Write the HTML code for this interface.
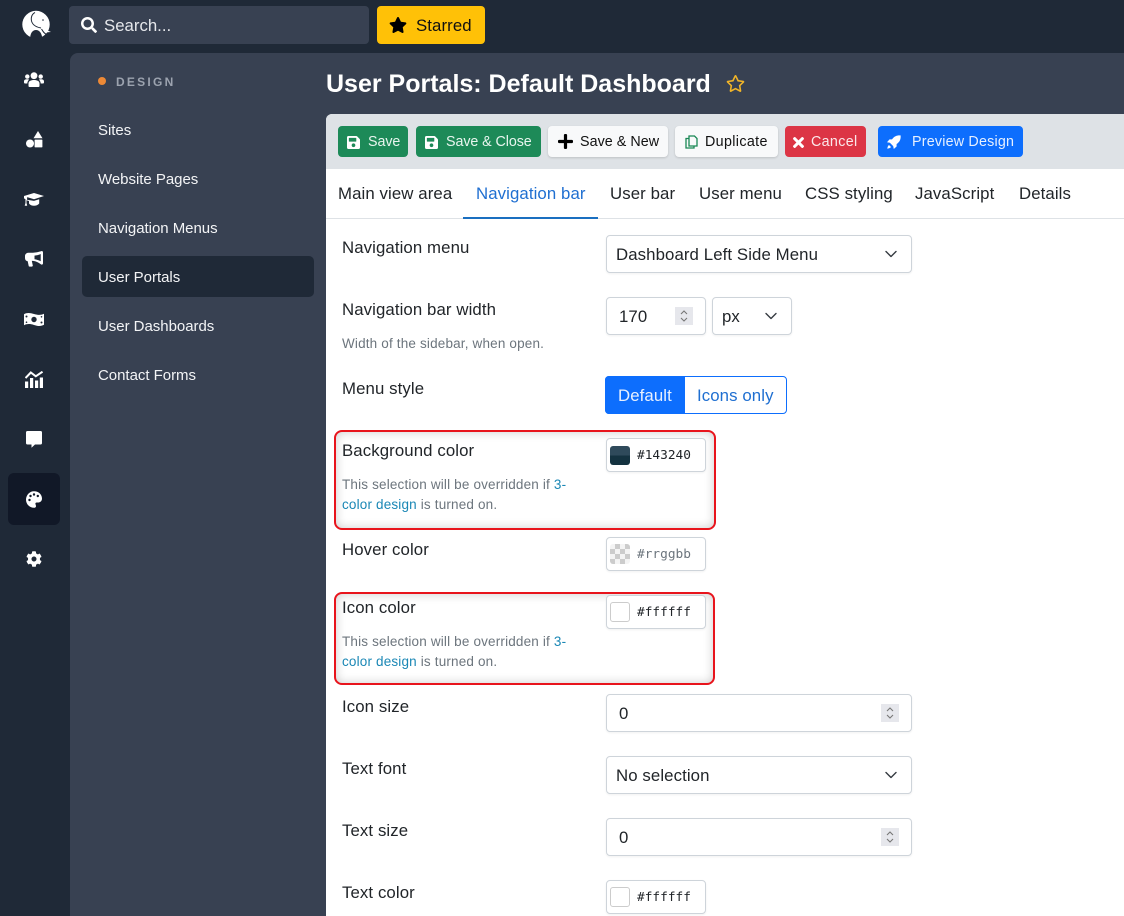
<!DOCTYPE html>
<html><head><meta charset="utf-8"><style>
html,body{margin:0;padding:0;width:1124px;height:916px;overflow:hidden;background:#1f2937;font-family:"Liberation Sans",sans-serif;color:#212529}
.a{position:absolute}
.t{position:absolute;white-space:nowrap;font-size:16.8px;line-height:20px;letter-spacing:.1px;margin-top:1px}
.n{color:#f3f4f6;font-size:15px;letter-spacing:-.03px;left:98px}
.h{font-size:13.5px;line-height:20px;color:#6c757d;letter-spacing:.17px;left:342px}
.h a{color:#1a87b5}
.b{position:absolute;top:126px;height:31px;border-radius:4px;font-size:14.3px;line-height:33px;white-space:nowrap;box-sizing:border-box}
.f{position:absolute;box-sizing:border-box;border:1px solid #ced4da;border-radius:4px;background:#fff;box-shadow:0 1px 2px rgba(0,0,0,.06)}
.sw{position:absolute;left:610px;width:20px;height:20px;box-sizing:border-box;border-radius:3px;border:1px solid #ccc;background:#fff}
.m{position:absolute;left:637px;font-family:"DejaVu Sans Mono",monospace;font-size:12.8px;line-height:18px;white-space:nowrap;color:#212529;margin-top:1px}
.r{position:absolute;box-sizing:border-box;border:2px solid #e8141c;border-radius:8px;box-shadow:inset 0 0 10px rgba(0,0,0,.2)}
svg{position:absolute;display:block}
</style></head><body>
<div class="a" style="left:70px;top:53px;width:1054px;height:863px;background:#384152;border-radius:8px 0 0 0"></div>
<div class="a" style="left:69px;top:6px;width:300px;height:38px;background:#384152;border-radius:4px"></div>
<svg style="left:81px;top:17px" width="16" height="16" viewBox="0 0 512 512" fill="#fff"><path d="M505 442.7L405.3 343c-4.5-4.5-10.6-7-17-7H372c27.6-35.3 44-79.7 44-128C416 93.1 322.9 0 208 0S0 93.1 0 208s93.1 208 208 208c48.3 0 92.7-16.4 128-44v16.3c0 6.4 2.5 12.5 7 17l99.7 99.7c9.4 9.4 24.6 9.4 33.9 0l28.3-28.3c9.4-9.4 9.4-24.6.1-34zM208 336c-70.7 0-128-57.2-128-128 0-70.7 57.2-128 128-128 70.7 0 128 57.2 128 128 0 70.7-57.2 128-128 128z"/></svg>
<div class="t" style="left:104px;top:15px;color:#e5e7eb;letter-spacing:0">Search...</div>
<div class="a" style="left:377px;top:6px;width:108px;height:38px;background:#ffc107;border-radius:4px"></div>
<svg style="left:389px;top:17px" width="18" height="16" viewBox="0 0 576 512" fill="#000"><path d="M259.3 17.8L194 150.2 47.9 171.5c-26.2 3.8-36.7 36.1-17.7 54.6l105.7 103-25 145.5c-4.5 26.3 23.2 46 46.4 33.7L288 439.6l130.7 68.7c23.2 12.2 50.9-7.4 46.4-33.7l-25-145.5 105.7-103c19-18.5 8.5-50.8-17.7-54.6L382 150.2 316.7 17.8c-11.7-23.6-45.6-23.9-57.4 0z"/></svg>
<div class="t" style="left:416px;top:15px;color:#111">Starred</div>

<!-- logo -->
<svg style="left:20px;top:9px" width="34" height="32" viewBox="0 0 34 32"><circle cx="16" cy="15.500" r="13.700" fill="#fff"/><path d="M10 31c0-7 2.500-10 6-10s6 3 6.500 10z" fill="#1f2937"/><path d="M15 3.500C11 5.500 10 11 13 15c2 2.500 5 3.500 8 4" fill="none" stroke="#1f2937" stroke-width="1"/><path d="M21.500 20c1.500 2.500 3 5 5.500 5.500" fill="none" stroke="#1f2937" stroke-width="1"/><path d="M22 19l9 4-6 .5z" fill="#fff"/><circle cx="23" cy="11" r=".8" fill="#1f2937"/></svg>

<!-- rail -->
<div class="a" style="left:8px;top:473px;width:52px;height:52px;background:#111827;border-radius:6px"></div>
<svg style="left:24px;top:72px" width="20" height="15" viewBox="0 0 20 15" fill="#fff"><circle cx="10" cy="3.700" r="3.400"/><circle cx="3.300" cy="4.600" r="2.200"/><circle cx="16.700" cy="4.600" r="2.200"/><path d="M4.500 14v-2.500C4.500 9 7 8 10 8s5.500 1 5.500 3.500V14q0 1-1 1h-9q-1 0-1-1zM0 9.500C0 8 1 7.300 3.300 7.300c.8 0 1.400.2 1.800.5-1 .8-1.700 2-1.800 3.700H1q-1 0-1-1zM20 9.500C20 8 19 7.300 16.700 7.300c-.8 0-1.400.2-1.800.5 1 .8 1.700 2 1.800 3.700H19q1 0 1-1z"/></svg>
<svg style="left:26px;top:131px" width="17" height="17" viewBox="0 0 17 17" fill="#fff"><path d="M12 0l4.500 7.300h-9z"/><circle cx="4" cy="12.500" r="4"/><rect x="8.600" y="8.600" width="7.800" height="7.800" rx=".6"/></svg>
<svg style="left:24px;top:193px" width="20" height="13" viewBox="0 0 20 13" fill="#fff"><path d="M10 0l10 3-10 3.200L3.200 4.100 3 6.700 10 7.900l5.200-1.600V10.500C14 12 12 12.800 10 12.800S6 12 5 10.500V8L2.500 7.300V10l.7 2.800H.7L1.500 10V6.300C.7 6 0 5.400 0 5V3z"/></svg>
<svg style="left:25px;top:251px" width="18" height="16" viewBox="0 0 18 16" fill="#fff"><path d="M16 .3c.9-.6 2-.2 2 1.200v10.800c0 1.200-1 1.700-2 1.100-2.800-2-5-3.300-8-3.500H6.800l1 4.600c.1.600-.4 1.100-1 1.100H4.500c-.4 0-.7-.3-.8-.6L2.700 10.300C1 10 0 8.800 0 7V5c0-2 1.600-3.300 3.500-3.300H8c3 0 5.300-.7 8-1.400zM15.700 3C13.800 4 11.500 4.400 9.500 4.600v3.600c2 .3 4.300 1 6.200 2z" fill-rule="evenodd"/></svg>
<svg style="left:24px;top:312px" width="20" height="15" viewBox="0 0 20 15"><path d="M0 2.200C3 .5 6 .8 10 2s7 1.300 10-.2v11c-3 1.700-6 1.500-10 .2s-7-1.300-10 .2z" fill="#fff"/><circle cx="10" cy="7.500" r="2.700" fill="#1f2937"/><circle cx="2.500" cy="4.500" r="1" fill="#1f2937"/><circle cx="17.500" cy="10.500" r="1" fill="#1f2937"/><circle cx="2.500" cy="10.200" r=".8" fill="#1f2937"/><circle cx="17.500" cy="4.800" r=".8" fill="#1f2937"/></svg>
<svg style="left:25px;top:371px" width="18" height="17" viewBox="0 0 18 17" fill="#fff"><rect x="0" y="10.500" width="3.200" height="6.500"/><rect x="5" y="7" width="3.200" height="10"/><rect x="10" y="9.500" width="3.200" height="7.500"/><rect x="14.800" y="6.500" width="3.200" height="10.500"/><path d="M.5 7L5.800 1.500l5 3.800L17.500.7" fill="none" stroke="#fff" stroke-width="2"/></svg>
<svg style="left:26px;top:431px" width="16" height="17" viewBox="0 0 16 17" fill="#fff"><path d="M1.500 0h13A1.500 1.500 0 0 1 16 1.500v10.500a1.500 1.500 0 0 1-1.500 1.500H9L5.500 16.800V13.500h-4A1.500 1.500 0 0 1 0 12V1.500A1.500 1.500 0 0 1 1.500 0z"/></svg>
<svg style="left:26px;top:491px" width="16" height="17" viewBox="0 0 16 17"><path d="M8 .2c4.400 0 8 3 8 7.300 0 2.700-2 4-4 4h-1.300c-1 0-1.600.9-1.200 1.800.3.700.5 1.300.5 1.900 0 1-.8 1.600-2 1.600-4.400 0-8-3.700-8-8.200S3.600.2 8 .2z" fill="#fff"/><g fill="#111827"><circle cx="3.500" cy="9" r="1.200"/><circle cx="4.500" cy="5" r="1.200"/><circle cx="8" cy="3.500" r="1.200"/><circle cx="11.800" cy="5" r="1.200"/></g></svg>
<svg style="left:26px;top:551px" width="16" height="16" viewBox="0 0 512 512" fill="#fff"><path d="M487.400 315.700l-42.600-24.600c4.300-23.200 4.300-47 0-70.200l42.600-24.600c4.900-2.800 7.100-8.600 5.500-14-11.100-35.600-30-67.800-54.700-94.600-3.800-4.100-10-5.100-14.800-2.300L380.800 110c-17.900-15.400-38.500-27.300-60.800-35.100V25.800c0-5.600-3.900-10.500-9.400-11.700-36.700-8.200-74.300-7.800-109.200 0-5.500 1.200-9.400 6.100-9.400 11.700V75c-22.200 7.900-42.800 19.800-60.800 35.100L88.700 85.500c-4.900-2.800-11-1.900-14.800 2.300-24.700 26.700-43.600 58.900-54.700 94.600-1.700 5.400.6 11.200 5.500 14L67.300 221c-4.300 23.200-4.300 47 0 70.200l-42.600 24.600c-4.900 2.800-7.100 8.600-5.500 14 11.100 35.600 30 67.800 54.700 94.600 3.800 4.100 10 5.100 14.800 2.300l42.600-24.600c17.900 15.400 38.500 27.300 60.800 35.100v49.200c0 5.600 3.900 10.500 9.400 11.700 36.700 8.200 74.300 7.800 109.200 0 5.500-1.200 9.400-6.100 9.400-11.700v-49.200c22.200-7.900 42.800-19.800 60.800-35.100l42.600 24.600c4.900 2.800 11 1.900 14.800-2.300 24.700-26.700 43.600-58.900 54.700-94.600 1.500-5.500-.7-11.300-5.600-14.100zM256 336c-44.100 0-80-35.900-80-80s35.900-80 80-80 80 35.900 80 80-35.900 80-80 80z"/></svg>

<!-- sidebar nav -->
<div class="a" style="left:98px;top:77px;width:8px;height:8px;border-radius:50%;background:#ed8936"></div>
<div class="t" style="left:116px;top:71px;font-size:12px;font-weight:bold;letter-spacing:2.250px;color:#9ca3af">DESIGN</div>
<div class="a" style="left:82px;top:256px;width:232px;height:41px;background:#1f2937;border-radius:5px"></div>
<div class="t n" style="top:120px">Sites</div>
<div class="t n" style="top:169px">Website Pages</div>
<div class="t n" style="top:218px">Navigation Menus</div>
<div class="t n" style="top:267px">User Portals</div>
<div class="t n" style="top:316px">User Dashboards</div>
<div class="t n" style="top:365px">Contact Forms</div>

<!-- heading -->
<div class="t" style="left:326px;top:68px;font-size:25px;line-height:30px;font-weight:bold;color:#fff;letter-spacing:0">User Portals: Default Dashboard</div>
<svg style="left:726px;top:75px" width="19" height="17" viewBox="0 0 576 512" fill="#f0b429"><path d="M528.100 171.500L382 150.200 316.700 17.800c-11.700-23.600-45.600-23.900-57.400 0L194 150.200 47.900 171.500c-26.200 3.800-36.700 36.100-17.700 54.600l105.700 103-25 145.500c-4.500 26.300 23.200 46 46.400 33.700L288 439.600l130.700 68.700c23.200 12.200 50.900-7.400 46.400-33.700l-25-145.500 105.700-103c19-18.500 8.500-50.800-17.700-54.600zM388.600 312.300l23.700 138.400L288 385.400l-124.300 65.300 23.700-138.400-100.600-98 139-20.200 62.200-126 62.200 126 139 20.200-100.600 98z"/></svg>

<!-- card -->
<div class="a" style="left:326px;top:114px;width:798px;height:802px;background:#fff;border-radius:6px 0 0 0;overflow:hidden"><div style="height:55px;background:#dee2e6"></div></div>

<!-- buttons -->
<div class="b" style="left:338px;width:70px;background:#1d8a58;color:#e8f5ee;padding-left:30px;letter-spacing:-.08px">Save</div>
<svg style="left:347px;top:136px" width="13" height="13" viewBox="0 32 448 448" fill="#fff"><path d="M433.941 129.941l-83.882-83.882A48 48 0 0 0 316.118 32H48C21.490 32 0 53.490 0 80v352c0 26.510 21.490 48 48 48h352c26.510 0 48-21.490 48-48V163.882a48 48 0 0 0-14.059-33.941zM224 416c-35.346 0-64-28.654-64-64 0-35.346 28.654-64 64-64s64 28.654 64 64c0 35.346-28.654 64-64 64zm96-304.520V212c0 6.627-5.373 12-12 12H76c-6.627 0-12-5.373-12-12V108c0-6.627 5.373-12 12-12h228.520c3.183 0 6.235 1.264 8.485 3.515l3.480 3.480A11.996 11.996 0 0 1 320 111.480z"/></svg>
<div class="b" style="left:416px;width:125px;background:#1d8a58;color:#e8f5ee;padding-left:30px;letter-spacing:-.08px">Save &amp; Close</div>
<svg style="left:425px;top:136px" width="13" height="13" viewBox="0 32 448 448" fill="#fff"><path d="M433.941 129.941l-83.882-83.882A48 48 0 0 0 316.118 32H48C21.490 32 0 53.490 0 80v352c0 26.510 21.490 48 48 48h352c26.510 0 48-21.490 48-48V163.882a48 48 0 0 0-14.059-33.941zM224 416c-35.346 0-64-28.654-64-64 0-35.346 28.654-64 64-64s64 28.654 64 64c0 35.346-28.654 64-64 64zm96-304.520V212c0 6.627-5.373 12-12 12H76c-6.627 0-12-5.373-12-12V108c0-6.627 5.373-12 12-12h228.520c3.183 0 6.235 1.264 8.485 3.515l3.480 3.480A11.996 11.996 0 0 1 320 111.480z"/></svg>
<div class="b" style="left:548px;width:120px;background:#f8f9fa;color:#111;padding-left:32px;letter-spacing:.05px;box-shadow:0 1px 2px rgba(0,0,0,.15)">Save &amp; New</div>
<svg style="left:558px;top:134px" width="15" height="15" viewBox="0 32 448 448" fill="#000"><path d="M416 208H272V64c0-17.670-14.330-32-32-32h-32c-17.670 0-32 14.330-32 32v144H32c-17.670 0-32 14.330-32 32v32c0 17.670 14.330 32 32 32h144v144c0 17.670 14.330 32 32 32h32c17.670 0 32-14.330 32-32V304h144c17.670 0 32-14.330 32-32v-32c0-17.670-14.330-32-32-32z"/></svg>
<div class="b" style="left:675px;width:103px;background:#f8f9fa;color:#111;padding-left:30px;letter-spacing:.35px;box-shadow:0 1px 2px rgba(0,0,0,.15)">Duplicate</div>
<svg style="left:685px;top:135px" width="13" height="14" viewBox="0 0 13 14" fill="none" stroke="#198754" stroke-width="1.300"><path d="M4 1h5.500L12 3.500V11H4zM4 3.500H1V13h8v-2"/></svg>
<div class="b" style="left:785px;width:81px;background:#dc3545;color:#fbe9eb;padding-left:26px;letter-spacing:.33px">Cancel</div>
<svg style="left:793px;top:137px" width="11" height="11" viewBox="0 80 352 352" fill="#fff"><path d="M242.720 256l100.070-100.070c12.280-12.280 12.280-32.190 0-44.480l-22.240-22.240c-12.280-12.280-32.190-12.280-44.480 0L176 189.280 75.930 89.210c-12.280-12.280-32.190-12.280-44.480 0L9.210 111.450c-12.280 12.280-12.280 32.190 0 44.480L109.280 256 9.210 356.070c-12.280 12.280-12.280 32.190 0 44.480l22.240 22.240c12.280 12.280 32.200 12.280 44.480 0L176 322.720l100.070 100.070c12.280 12.280 32.200 12.280 44.480 0l22.240-22.240c12.280-12.280 12.280-32.190 0-44.480L242.720 256z"/></svg>
<div class="b" style="left:878px;width:145px;background:#0d6efd;color:#e7f0ff;padding-left:34px;letter-spacing:.2px">Preview Design</div>
<svg style="left:887px;top:135px" width="14" height="14" viewBox="0 0 14 14" fill="#fff"><path d="M13.600.4c.4 3.600-.8 6.500-4 8.600v2.500L6.800 14l-.6-2.900L2.900 7.800 0 7.200 2.500 4.400H5C7 1.300 10 .1 13.600.4zM2 10c-1 .7-1.500 2-1.700 3.700C2 13.500 3.300 13 4 12z"/></svg>

<!-- tabs -->
<div class="a" style="left:326px;top:218px;width:798px;height:1px;background:#dee2e6"></div>
<div class="a" style="left:463px;top:217px;width:135px;height:2px;background:#1a6fc0"></div>
<div class="t" style="left:338px;top:183px">Main view area</div>
<div class="t" style="left:476px;top:183px;color:#1f6fd1">Navigation bar</div>
<div class="t" style="left:610px;top:183px">User bar</div>
<div class="t" style="left:699px;top:183px">User menu</div>
<div class="t" style="left:805px;top:183px">CSS styling</div>
<div class="t" style="left:915px;top:183px">JavaScript</div>
<div class="t" style="left:1019px;top:183px">Details</div>

<!-- red boxes -->
<div class="r" style="left:334px;top:430px;width:382px;height:100px"></div>
<div class="r" style="left:334px;top:592px;width:381px;height:93px"></div>

<!-- labels -->
<div class="t" style="left:342px;top:237px">Navigation menu</div>
<div class="t" style="left:342px;top:299px">Navigation bar width</div>
<div class="t h" style="top:333px">Width of the sidebar, when open.</div>
<div class="t" style="left:342px;top:378px">Menu style</div>
<div class="t" style="left:342px;top:440px">Background color</div>
<div class="t h" style="top:474px">This selection will be overridden if <a>3-</a></div>
<div class="t h" style="top:494px"><a>color design</a> is turned on.</div>
<div class="t" style="left:342px;top:539px">Hover color</div>
<div class="t" style="left:342px;top:597px">Icon color</div>
<div class="t h" style="top:631px">This selection will be overridden if <a>3-</a></div>
<div class="t h" style="top:651px"><a>color design</a> is turned on.</div>
<div class="t" style="left:342px;top:696px">Icon size</div>
<div class="t" style="left:342px;top:758px">Text font</div>
<div class="t" style="left:342px;top:820px">Text size</div>
<div class="t" style="left:342px;top:882px">Text color</div>

<!-- fields -->
<div class="f" style="left:606px;top:235px;width:306px;height:38px"></div>
<div class="t" style="left:616px;top:244px">Dashboard Left Side Menu</div>
<svg style="left:885px;top:250px" width="12" height="8" viewBox="0 0 12 8" fill="none" stroke="#343a40" stroke-width="1.400" stroke-linecap="round" stroke-linejoin="round"><path d="M1 1.500L6 6.500l5-5"/></svg>

<div class="f" style="left:606px;top:297px;width:100px;height:38px"></div>
<div class="t" style="left:619px;top:306px">170</div>
<div class="a" style="left:675px;top:307px;width:18px;height:18px;background:#e6e7ec"></div>
<svg style="left:679px;top:309px" width="10" height="14" viewBox="0 0 10 14" fill="none" stroke="#777" stroke-width="1.100"><path d="M2 5l3-3 3 3M2 9l3 3 3-3"/></svg>
<div class="f" style="left:712px;top:297px;width:80px;height:38px"></div>
<div class="t" style="left:722px;top:306px">px</div>
<svg style="left:765px;top:312px" width="12" height="8" viewBox="0 0 12 8" fill="none" stroke="#343a40" stroke-width="1.400" stroke-linecap="round" stroke-linejoin="round"><path d="M1 1.500L6 6.500l5-5"/></svg>

<div class="a" style="left:605px;top:376px;width:182px;height:38px;box-sizing:border-box;border:1px solid #0d6efd;border-radius:4px;background:#fff"></div>
<div class="a" style="left:605px;top:376px;width:80px;height:38px;background:#0d6efd;border-radius:4px 0 0 4px"></div>
<div class="t" style="left:618px;top:385px;color:#e7f0ff">Default</div>
<div class="t" style="left:697px;top:385px;color:#1f6fd1">Icons only</div>

<div class="f" style="left:606px;top:438px;width:100px;height:34px"></div>
<div class="a" style="left:610px;top:446px;width:20px;height:19px;border-radius:3px;background:linear-gradient(#2f4a5b 0,#2f4a5b 50%,#143240 50%,#143240 100%)"></div>
<div class="m" style="top:446px">#143240</div>

<div class="f" style="left:606px;top:537px;width:100px;height:34px"></div>
<div class="a" style="left:610px;top:544px;width:20px;height:20px;border-radius:3px;background:repeating-conic-gradient(#ccc 0 25%,#f4f4f4 0 50%) 0 0/10px 10px"></div>
<div class="m" style="top:545px;color:#6c757d">#rrggbb</div>

<div class="f" style="left:606px;top:595px;width:100px;height:34px"></div>
<div class="sw" style="top:602px"></div>
<div class="m" style="top:603px">#ffffff</div>

<div class="f" style="left:606px;top:694px;width:306px;height:38px"></div>
<div class="t" style="left:619px;top:703px">0</div>
<div class="a" style="left:881px;top:704px;width:18px;height:18px;background:#e6e7ec"></div>
<svg style="left:885px;top:706px" width="10" height="14" viewBox="0 0 10 14" fill="none" stroke="#777" stroke-width="1.100"><path d="M2 5l3-3 3 3M2 9l3 3 3-3"/></svg>

<div class="f" style="left:606px;top:756px;width:306px;height:38px"></div>
<div class="t" style="left:616px;top:765px">No selection</div>
<svg style="left:885px;top:771px" width="12" height="8" viewBox="0 0 12 8" fill="none" stroke="#343a40" stroke-width="1.400" stroke-linecap="round" stroke-linejoin="round"><path d="M1 1.500L6 6.500l5-5"/></svg>

<div class="f" style="left:606px;top:818px;width:306px;height:38px"></div>
<div class="t" style="left:619px;top:827px">0</div>
<div class="a" style="left:881px;top:828px;width:18px;height:18px;background:#e6e7ec"></div>
<svg style="left:885px;top:830px" width="10" height="14" viewBox="0 0 10 14" fill="none" stroke="#777" stroke-width="1.100"><path d="M2 5l3-3 3 3M2 9l3 3 3-3"/></svg>

<div class="f" style="left:606px;top:880px;width:100px;height:34px"></div>
<div class="sw" style="top:887px"></div>
<div class="m" style="top:888px">#ffffff</div>
</body></html>
